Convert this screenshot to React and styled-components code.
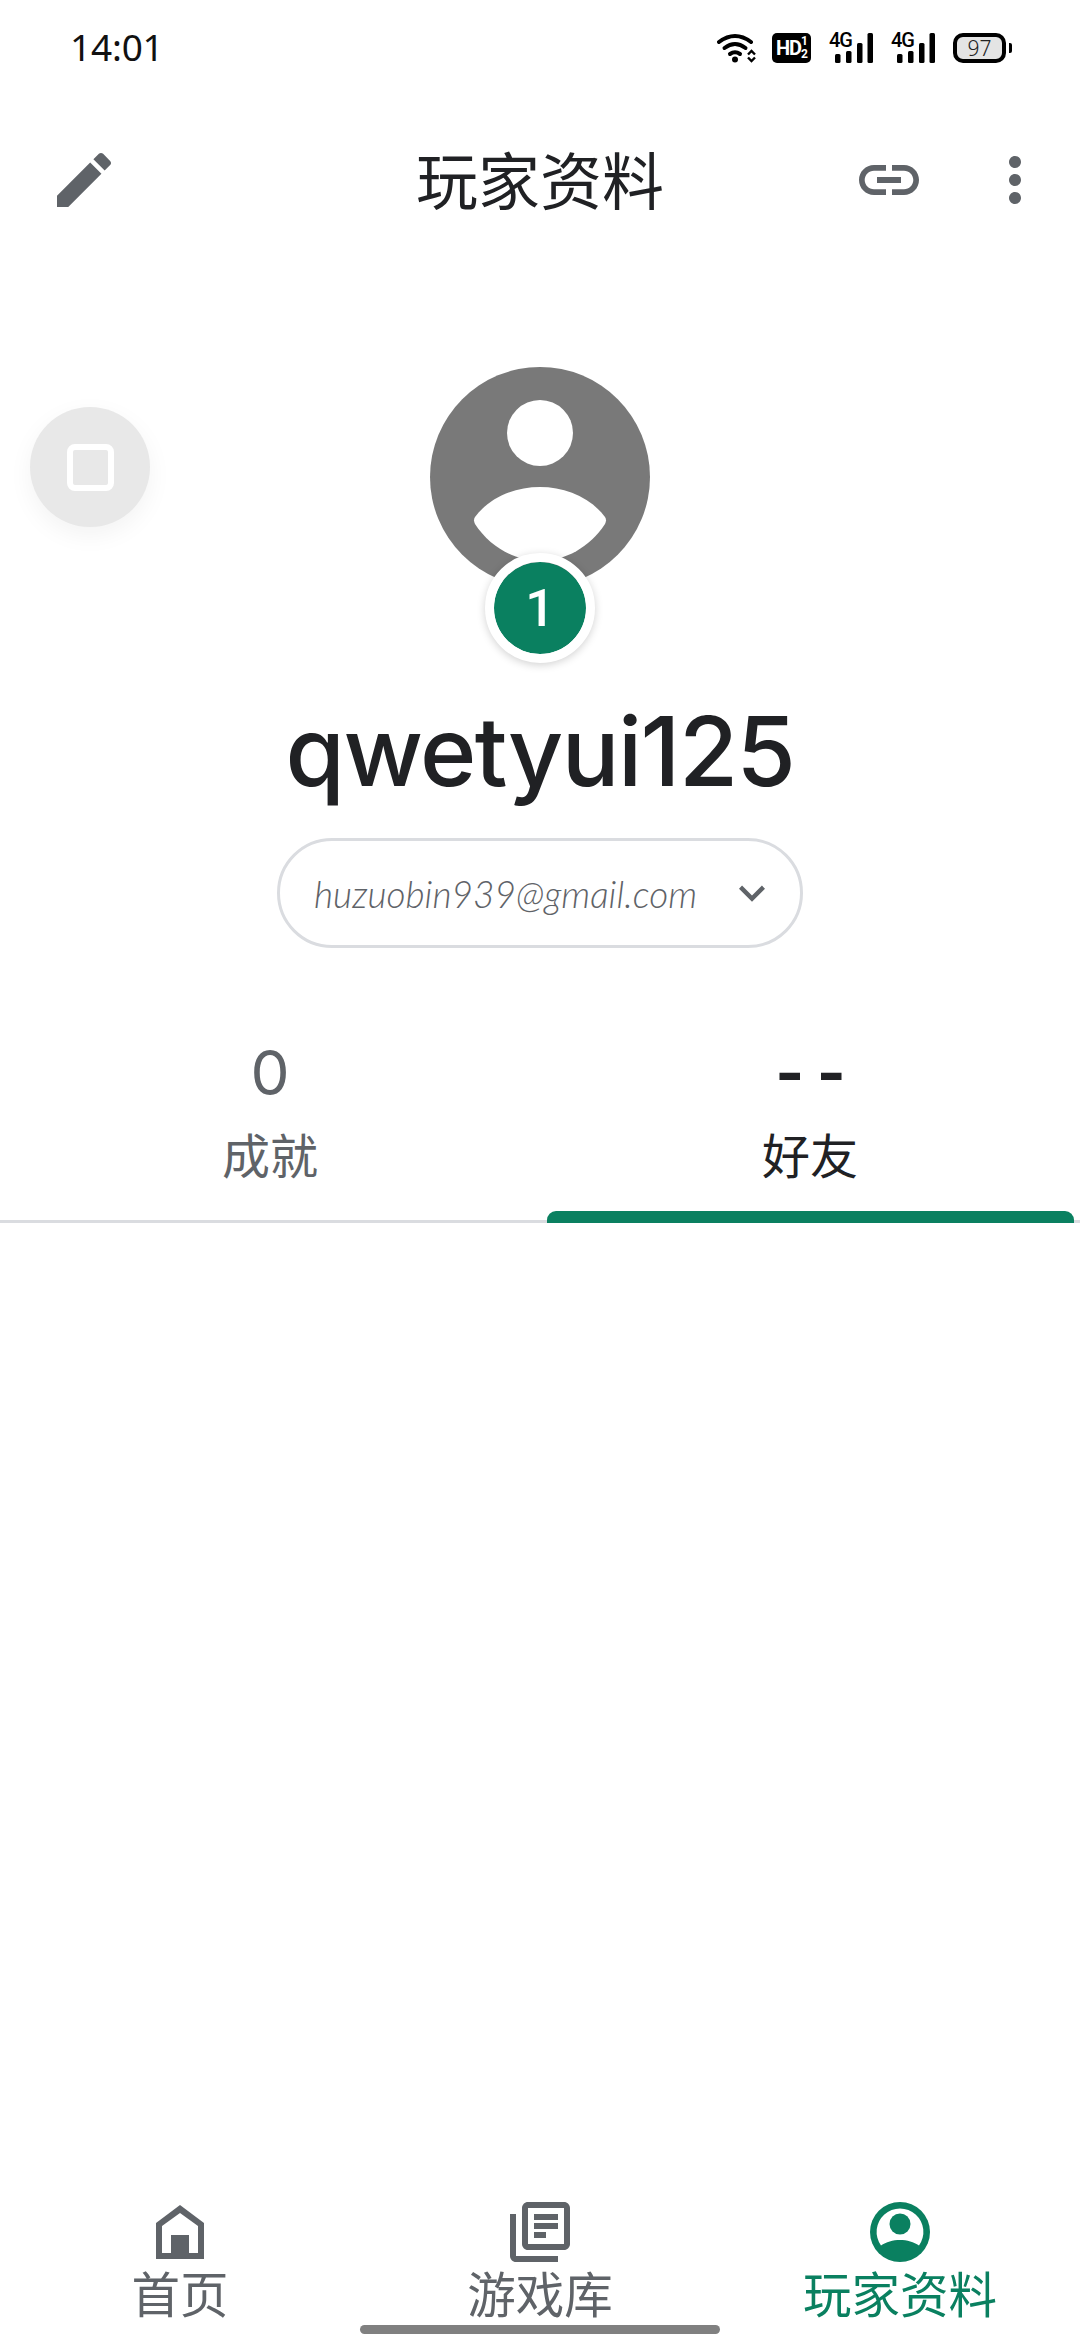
import styled, { createGlobalStyle } from "styled-components";

const GREEN = "#0a8060";
const GREY = "#5f6368";
const INK = "#202124";
const CJK = `"Noto Sans CJK SC", "Noto Sans", sans-serif`;

const GlobalStyle = createGlobalStyle`
  html, body {
    margin: 0;
    padding: 0;
    background: #fff;
  }
  * {
    box-sizing: border-box;
  }
`;

const Page = styled.div`
  position: relative;
  width: 1080px;
  height: 2340px;
  display: flex;
  flex-direction: column;
  background: #fff;
  overflow: hidden;
  font-family: ${CJK};
`;

const StatusBar = styled.div`
  height: 96px;
  display: flex;
  align-items: center;
  justify-content: space-between;
  padding: 0 69px 0 70px;
`;

const Clock = styled.span`
  font-family: "Noto Sans", sans-serif;
  font-size: 37px;
  letter-spacing: -0.2px;
  line-height: 44px;
  margin-top: -2px;
  color: #111;
`;

const StatusIcons = styled.div`
  display: flex;
  align-items: center;
  gap: 18px;
`;

const HdBadge = styled.div`
  width: 39px;
  height: 30px;
  margin-left: -2px;
  padding: 0 3px 0 4px;
  display: flex;
  align-items: center;
  justify-content: space-between;
  border-radius: 5px;
  background: #000;
  color: #fff;
  font-family: Roboto, sans-serif;
  font-weight: 700;
`;

const HdText = styled.span`
  font-size: 20px;
  line-height: 24px;
  letter-spacing: -1.2px;
`;

const HdFraction = styled.span`
  display: flex;
  flex-direction: column;
  align-items: center;
  font-size: 12px;
  line-height: 13px;
`;

const Signal = styled.div`
  position: relative;
  width: 44px;
  height: 30px;
`;

const SignalType = styled.span`
  position: absolute;
  left: 0;
  top: -1px;
  font-family: Roboto, sans-serif;
  font-weight: 500;
  font-size: 20px;
  line-height: 17px;
  letter-spacing: -1.2px;
  color: #000;
`;

const Battery = styled.div`
  position: relative;
  width: 53px;
  height: 30px;
  margin-right: 5px;
  display: flex;
  align-items: center;
  justify-content: center;
  border: 4px solid #000;
  border-radius: 10px;
  background: #e4e4e4;
  font-family: "Noto Sans", sans-serif;
  font-weight: 300;
  font-size: 21px;
  line-height: 22px;
  color: #222;

  &::after {
    content: "";
    position: absolute;
    right: -10px;
    top: 6px;
    width: 3px;
    height: 10px;
    border-radius: 0 2px 2px 0;
    background: #000;
  }
`;

const TopBar = styled.div`
  height: 168px;
  display: grid;
  grid-template-columns: 1fr auto 1fr;
  align-items: center;
`;

const TopLeading = styled.div`
  padding-left: 48px;
`;

const Title = styled.h1`
  margin: 0 0 5px;
  font-size: 62px;
  font-weight: 400;
  line-height: 80px;
  color: ${INK};
`;

const TopActions = styled.div`
  display: flex;
  justify-content: flex-end;
  gap: 54px;
  padding-right: 29px;
`;

const Icon = styled.svg`
  display: block;
  flex: none;
  width: ${(p) => p.$size || 72}px;
  height: ${(p) => p.$size || 72}px;
  fill: ${(p) => p.$color || GREY};
`;

const Profile = styled.section`
  display: flex;
  flex-direction: column;
  align-items: center;
  padding-top: 103px;
`;

const AvatarWrap = styled.div`
  position: relative;
  width: 220px;
  height: 220px;
`;

const LevelBadge = styled.div`
  position: absolute;
  left: 55px;
  top: 186px;
  width: 110px;
  height: 110px;
  display: flex;
  align-items: center;
  justify-content: center;
  border: 9px solid #fff;
  border-radius: 50%;
  background: ${GREEN};
  background-clip: padding-box;
  box-shadow: 0 2px 8px rgba(0, 0, 0, 0.18);
  color: #fff;
  font-family: Roboto, sans-serif;
  font-weight: 500;
  font-size: 52px;
`;

const PlayerName = styled.h2`
  margin: 109px 0 0;
  font-family: Inter, sans-serif;
  font-weight: 500;
  font-size: 96px;
  line-height: 110px;
  letter-spacing: -1.5px;
  color: ${INK};
`;

const AccountPill = styled.div`
  width: 526px;
  height: 110px;
  margin-top: 32px;
  padding: 0 22px 0 34px;
  display: flex;
  align-items: center;
  justify-content: space-between;
  border: 3px solid #dadce0;
  border-radius: 55px;
`;

const AccountEmail = styled.span`
  font-family: Lato, sans-serif;
  font-style: italic;
  font-weight: 300;
  font-size: 37px;
  color: ${GREY};
`;

const Tabs = styled.div`
  display: grid;
  grid-template-columns: 1fr 1fr;
  margin-top: 57px;
  height: 218px;
  border-bottom: 3px solid #dadce0;
`;

const Tab = styled.div`
  position: relative;
  display: flex;
  flex-direction: column;
  align-items: center;
  padding-top: 33px;
  color: ${(p) => (p.$active ? INK : GREY)};
`;

const TabValue = styled.span`
  font-family: Inter, sans-serif;
  font-size: ${(p) => (p.$active ? 62 : 62)}px;
  line-height: 70px;
  font-weight: ${(p) => (p.$active ? 700 : 400)};
  letter-spacing: ${(p) => (p.$active ? "-1px" : "0")};
`;

const TabLabel = styled.span`
  font-size: 48px;
  line-height: 70px;
  margin-top: 10px;
`;

const TabIndicator = styled.div`
  position: absolute;
  left: 7px;
  right: 6px;
  bottom: -3px;
  height: 12px;
  border-radius: 9px 9px 0 0;
  background: ${GREEN};
`;

const Spacer = styled.div`
  flex: 1;
`;

const BottomNav = styled.nav`
  display: grid;
  grid-template-columns: repeat(3, 360px);
`;

const NavItem = styled.div`
  display: flex;
  flex-direction: column;
  align-items: center;
  color: ${(p) => (p.$active ? GREEN : GREY)};
`;

const NavLabel = styled.span`
  font-size: 48.5px;
  line-height: 50px;
  margin-top: -1px;
`;

const HomeIndicator = styled.div`
  width: 360px;
  height: 9px;
  margin: 8px auto 6px;
  border-radius: 5px;
  background: #808080;
`;

const FloatingButton = styled.div`
  position: absolute;
  left: 30px;
  top: 407px;
  width: 120px;
  height: 120px;
  display: flex;
  align-items: center;
  justify-content: center;
  border-radius: 50%;
  background: #e8e8e8;
  box-shadow: 0 8px 24px rgba(0, 0, 0, 0.05);
`;

const FloatingGlyph = styled.div`
  width: 47px;
  height: 47px;
  border: 6px solid #fff;
  border-radius: 8px;
`;

const WifiIcon = () => (
  <svg width="39" height="30" viewBox="0 0 39 30">
    <g fill="none" stroke="#000" strokeWidth="4" strokeLinecap="round">
      <path d="M2 9Q18-3 34 9" />
      <path d="M7.5 15Q18 7 28.5 15" />
      <path d="M13 21Q18 17.5 23 21" />
    </g>
    <circle cx="18" cy="26.5" r="3" fill="#000" />
    <g fill="none" stroke="#000" strokeWidth="2.4">
      <path d="M31 21.5l3.5-3.5 3.5 3.5" />
      <path d="M31 24.5l3.5 3.5 3.5-3.5" />
    </g>
  </svg>
);

const SignalIcon = () => (
  <Signal>
    <SignalType>4G</SignalType>
    <svg width="44" height="30" viewBox="0 0 44 30">
      <rect x="6" y="21" width="5.5" height="9" rx="1.5" />
      <rect x="17" y="18" width="5.5" height="12" rx="1.5" />
      <rect x="28" y="10" width="5.5" height="20" rx="1.5" />
      <rect x="38.5" y="0" width="5.5" height="30" rx="1.5" />
    </svg>
  </Signal>
);

const AccountIcon = () => (
  <Icon viewBox="-6 -6 72 72" $color={GREEN}>
    <circle cx="30" cy="30" r="30" />
    <path
      fill="#fff"
      d="M11 43.5A23.4 23.4 0 1 1 49 43.5C44 40 37 38 30 38C23 38 16 40 11 43.5Z"
    />
    <circle cx="30" cy="22" r="10.5" />
  </Icon>
);

export default function App() {
  return (
    <Page>
      <GlobalStyle />
      <StatusBar>
        <Clock>14:01</Clock>
        <StatusIcons>
          <WifiIcon />
          <HdBadge>
            <HdText>HD</HdText>
            <HdFraction>
              <span>1</span>
              <span>2</span>
            </HdFraction>
          </HdBadge>
          <SignalIcon />
          <SignalIcon />
          <Battery>97</Battery>
        </StatusIcons>
      </StatusBar>

      <TopBar>
        <TopLeading>
          <Icon viewBox="0 0 24 24">
            <path d="M3 17.25V21h3.75L17.81 9.94l-3.75-3.75L3 17.25zM20.71 7.04c.39-.39.39-1.02 0-1.41l-2.34-2.34c-.39-.39-1.02-.39-1.41 0l-1.83 1.83 3.75 3.75 1.83-1.83z" />
          </Icon>
        </TopLeading>
        <Title>玩家资料</Title>
        <TopActions>
          <Icon viewBox="0 0 24 24">
            <path d="M3.9 12c0-1.71 1.39-3.1 3.1-3.1h4V7H7c-2.76 0-5 2.24-5 5s2.24 5 5 5h4v-1.9H7c-1.71 0-3.1-1.39-3.1-3.1zM8 13h8v-2H8v2zm9-6h-4v1.9h4c1.71 0 3.1 1.39 3.1 3.1s-1.39 3.1-3.1 3.1h-4V17h4c2.76 0 5-2.24 5-5s-2.24-5-5-5z" />
          </Icon>
          <Icon viewBox="0 0 24 24">
            <path d="M12 8c1.1 0 2-.9 2-2s-.9-2-2-2-2 .9-2 2 .9 2 2 2zm0 2c-1.1 0-2 .9-2 2s.9 2 2 2 2-.9 2-2-.9-2-2-2zm0 6c-1.1 0-2 .9-2 2s.9 2 2 2 2-.9 2-2-.9-2-2-2z" />
          </Icon>
        </TopActions>
      </TopBar>

      <Profile>
        <AvatarWrap>
          <Icon viewBox="0 0 220 220" $size={220} $color="#797979">
            <circle cx="110" cy="110" r="110" />
            <circle cx="110" cy="66" r="33" fill="#fff" />
            <path
              fill="#fff"
              d="M45 150C60 130 85 120 110 120C135 120 160 130 175 150Q177 153 175 157C160 180 135 194 110 194C85 194 60 180 45 157Q43 153 45 150Z"
            />
          </Icon>
          <LevelBadge>1</LevelBadge>
        </AvatarWrap>
        <PlayerName>qwetyui125</PlayerName>
        <AccountPill>
          <AccountEmail>huzuobin939@gmail.com</AccountEmail>
          <Icon viewBox="0 0 24 24" $size={52}>
            <path d="M16.59 8.59L12 13.17 7.41 8.59 6 10l6 6 6-6z" />
          </Icon>
        </AccountPill>
      </Profile>

      <Tabs>
        <Tab>
          <TabValue>0</TabValue>
          <TabLabel>成就</TabLabel>
        </Tab>
        <Tab $active>
          <TabValue $active>- -</TabValue>
          <TabLabel>好友</TabLabel>
          <TabIndicator />
        </Tab>
      </Tabs>

      <Spacer />

      <BottomNav>
        <NavItem>
          <Icon viewBox="0 0 72 72">
            <path
              fillRule="evenodd"
              d="M36 9L60 27V63H12V27ZM36 17L18 30V57H27V39H45V57H54V30Z"
            />
          </Icon>
          <NavLabel>首页</NavLabel>
        </NavItem>
        <NavItem>
          <Icon viewBox="0 0 24 24">
            <path d="M4 6H2v14c0 1.1.9 2 2 2h14v-2H4V6zm16-4H8c-1.1 0-2 .9-2 2v12c0 1.1.9 2 2 2h12c1.1 0 2-.9 2-2V4c0-1.1-.9-2-2-2zm0 14H8V4h12v12zM10 9h8v2h-8zm0 3h4v2h-4zm0-6h8v2h-8z" />
          </Icon>
          <NavLabel>游戏库</NavLabel>
        </NavItem>
        <NavItem $active>
          <AccountIcon />
          <NavLabel>玩家资料</NavLabel>
        </NavItem>
      </BottomNav>
      <HomeIndicator />

      <FloatingButton>
        <FloatingGlyph />
      </FloatingButton>
    </Page>
  );
}
